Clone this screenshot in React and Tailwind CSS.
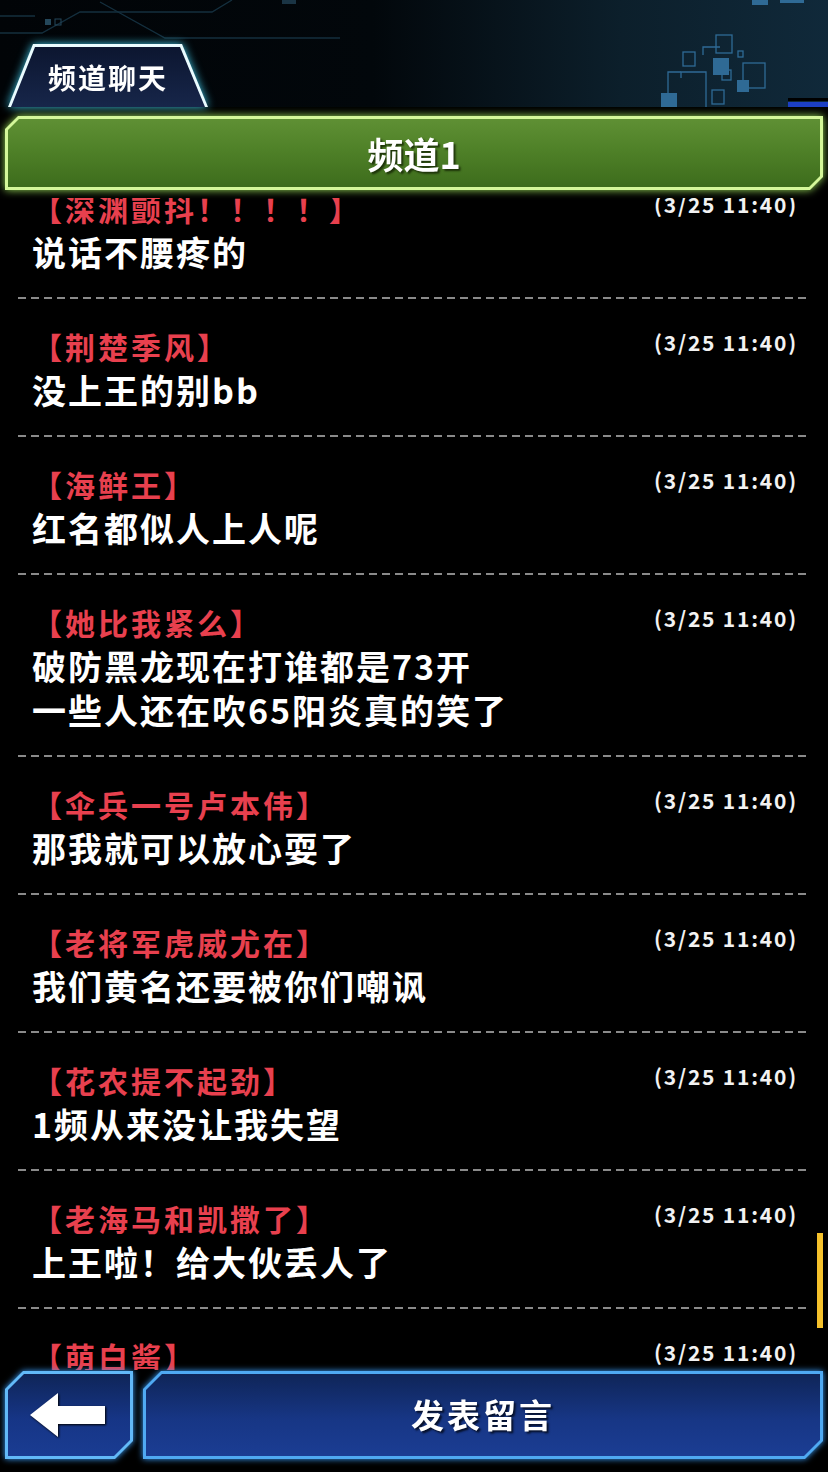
import React from 'react';

const messages = [
  { name: '深渊颤抖！！！！', lines: ['说话不腰疼的'] },
  { name: '荆楚季风', lines: ['没上王的别bb'] },
  { name: '海鲜王', lines: ['红名都似人上人呢'] },
  { name: '她比我紧么', lines: ['破防黑龙现在打谁都是73开', '一些人还在吹65阳炎真的笑了'] },
  { name: '伞兵一号卢本伟', lines: ['那我就可以放心耍了'] },
  { name: '老将军虎威尤在', lines: ['我们黄名还要被你们嘲讽'] },
  { name: '花农提不起劲', lines: ['1频从来没让我失望'] },
  { name: '老海马和凯撒了', lines: ['上王啦！给大伙丢人了'] },
  { name: '萌白酱', lines: [''] },
];

function HeaderArt() {
  return (
    <svg className="absolute inset-0" width="828" height="107" viewBox="0 0 828 107" fill="none">
      <g stroke="#142f3e" strokeWidth="1.3">
        <path d="M0 33 H42 L80 12 H212 L232 0" />
        <path d="M100 2 L165 38 H340" />
        <path d="M0 16 H35" />
      </g>
      <rect x="45" y="19" width="6" height="6" fill="#24475a" />
      <rect x="55" y="19" width="6" height="6" stroke="#24475a" />
      <rect x="282" y="0" width="14" height="4" fill="#1a3444" />
      <g stroke="#2f6a95" strokeWidth="1.3">
        <rect x="716" y="35" width="16" height="18" />
        <rect x="683" y="52" width="12" height="14" />
        <rect x="738" y="51" width="5" height="6" />
        <path d="M681 78 V72 H706 V107" />
        <path d="M703 55 V47 H720" />
        <rect x="743" y="63" width="22" height="25" />
        <rect x="712" y="90" width="12" height="14" />
        <path d="M668 103 V72 H681" />
        <rect x="722" y="70" width="9" height="10" />
      </g>
      <g fill="#2f6a95">
        <rect x="713" y="58" width="16" height="17" />
        <rect x="737" y="80" width="12" height="12" />
        <rect x="661" y="93" width="16" height="14" />
        <rect x="752" y="0" width="16" height="5" />
        <rect x="780" y="0" width="24" height="3" />
      </g>
      <rect x="788" y="98" width="40" height="3" fill="#000" />
      <rect x="788" y="102" width="40" height="5" fill="#1c3fc4" />
    </svg>
  );
}

function ChatRow({ name, lines }) {
  return (
    <div>
      <div className="pt-[25px] pb-[23px] pl-[32px] pr-[30px]">
        <div className="flex items-center justify-between h-[44px]">
          <span className="text-[30px] tracking-[3px] font-bold text-[#e8404e] whitespace-nowrap">【{name}】</span>
          <span className="text-[21px] tracking-[1.8px] font-bold text-[#f2f2f2] -mt-[6px]">(3/25 11:40)</span>
        </div>
        {lines.map((line, i) => (
          <div key={i} className="h-[44px] leading-[44px] text-[34px] tracking-[2px] font-bold text-white whitespace-nowrap">
            {line}
          </div>
        ))}
      </div>
      <div className="mx-[18px] h-[2px] bg-[repeating-linear-gradient(90deg,#8a8a8a_0_8px,transparent_8px_13px)]" />
    </div>
  );
}

export default function App() {
  return (
    <div className="relative w-[828px] h-[1472px] bg-black overflow-hidden flex flex-col font-['Noto_Sans_CJK_SC','Noto_Sans',sans-serif]">
      {/* header */}
      <div className="relative h-[107px] shrink-0 bg-[linear-gradient(90deg,#010407_0%,#02070b_45%,#0c1f2b_75%,#10293a_100%)]">
        <HeaderArt />
        <div className="relative pl-[8px] pt-[44px]">
          <div className="w-[200px] h-[63px] drop-shadow-[0_0_5px_#3fc6e6]">
            <div className="h-full pt-[3px] px-[3px] bg-[#eafcff] [clip-path:polygon(25px_0,174px_0,100%_100%,0_100%)]">
              <div className="h-full flex items-center pl-[37px] bg-[linear-gradient(180deg,#0c1630,#17264a)] [clip-path:polygon(24px_0,169px_0,100%_100%,0_100%)]">
                <span className="text-[28px] tracking-[2px] font-bold text-white">频道聊天</span>
              </div>
            </div>
          </div>
        </div>
      </div>

      {/* channel bar */}
      <div className="mt-[9px] mx-[5px] h-[74px] shrink-0 drop-shadow-[0_0_4px_#9be05a]">
        <div className="h-full p-[3px] bg-[#d4f79a] [clip-path:polygon(13px_0,100%_0,100%_calc(100%_-_13px),calc(100%_-_13px)_100%,0_100%,0_13px)]">
          <div className="h-full flex items-center justify-center bg-[linear-gradient(180deg,#5f9034_0%,#4f8128_45%,#3d6c1c_100%)] [clip-path:polygon(11px_0,100%_0,100%_calc(100%_-_11px),calc(100%_-_11px)_100%,0_100%,0_11px)]">
            <span className="text-[36px] font-bold text-white [text-shadow:2px_2px_2px_#1d3309]">频道1</span>
          </div>
        </div>
      </div>

      {/* chat list */}
      <div className="mt-[8px] h-[1172px] shrink-0 overflow-hidden">
        <div className="-mt-[37px]">
          {messages.map((m, i) => (
            <ChatRow key={i} name={m.name} lines={m.lines} />
          ))}
        </div>
      </div>

      {/* bottom buttons */}
      <div className="mt-[1px] h-[88px] shrink-0 flex gap-[10px] pl-[5px] pr-[5px]">
        <div className="w-[128px] h-full drop-shadow-[0_0_3px_#3aa0ff]">
          <div className="h-full p-[3px] bg-[#62b9f8] [clip-path:polygon(18px_0,100%_0,100%_calc(100%_-_18px),calc(100%_-_18px)_100%,0_100%,0_18px)]">
            <div className="h-full flex items-center justify-center bg-[linear-gradient(180deg,#0f2558_0%,#163586_55%,#1a3c92_100%)] [clip-path:polygon(16px_0,100%_0,100%_calc(100%_-_16px),calc(100%_-_16px)_100%,0_100%,0_16px)]">
              <svg width="76" height="44" viewBox="0 0 76 44" className="-ml-[2px] drop-shadow-[1px_1px_1px_#000]">
                <polygon points="0,22 28,0 28,13 75,13 75,31 28,31 28,44" fill="#fff" />
              </svg>
            </div>
          </div>
        </div>
        <div className="flex-1 h-full drop-shadow-[0_0_3px_#3aa0ff]">
          <div className="h-full p-[3px] bg-[#4fa9f2] [clip-path:polygon(18px_0,100%_0,100%_calc(100%_-_18px),calc(100%_-_18px)_100%,0_100%,0_18px)]">
            <div className="h-full flex items-center justify-center bg-[linear-gradient(180deg,#0f2558_0%,#173685_55%,#1b3d93_100%)] [clip-path:polygon(16px_0,100%_0,100%_calc(100%_-_16px),calc(100%_-_16px)_100%,0_100%,0_16px)]">
              <span className="text-[33px] tracking-[3px] font-bold text-white [text-shadow:2px_2px_2px_#06102a]">发表留言</span>
            </div>
          </div>
        </div>
      </div>

      {/* scrollbar */}
      <div className="absolute left-[817px] top-[1233px] w-[6px] h-[95px] bg-[#f5c12b]" />
    </div>
  );
}
